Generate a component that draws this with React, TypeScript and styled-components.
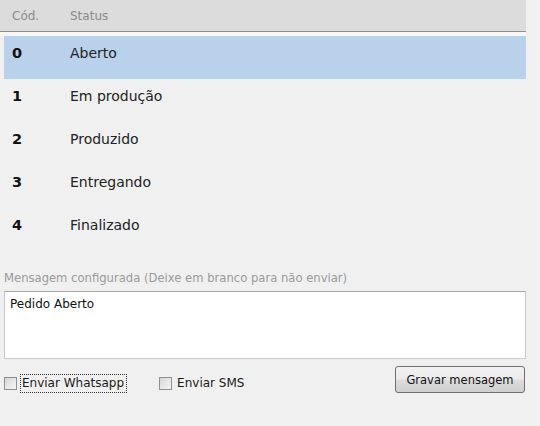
import React from 'react'
import styled, { createGlobalStyle } from 'styled-components'

const GlobalStyle = createGlobalStyle`
  html, body {
    margin: 0;
    padding: 0;
    background: #f0f0f0;
    font-family: 'DejaVu Sans', Verdana, sans-serif;
  }
`

const Page = styled.div`
  width: 540px;
  height: 426px;
  display: flex;
  flex-direction: column;
`

const Grid = styled.div`
  width: 526px;
  display: flex;
  flex-direction: column;
`

const HeaderRow = styled.div`
  height: 31px;
  display: flex;
  align-items: center;
  padding-left: 12px;
  background: #dcdcdc;
  border-bottom: 1px solid #8e8e8e;
  font-size: 12px;
  color: #8a8a8a;
`

const HeaderCell = styled.div<{ w?: number }>`
  width: ${({ w }) => (w ? `${w}px` : 'auto')};
  flex: ${({ w }) => (w ? 'none' : '1')};
`

const Gap = styled.div`
  height: 4px;
  background: #f7f7f7;
`

const Row = styled.div<{ selected?: boolean }>`
  height: 43px;
  margin-left: 4px;
  padding: 8px 0 0 8px;
  box-sizing: border-box;
  display: flex;
  align-items: flex-start;
  line-height: 18px;
  background: ${({ selected }) => (selected ? '#b9d1ea' : 'transparent')};
`

const Code = styled.div`
  width: 58px;
  font-size: 14.5px;
  font-weight: bold;
  color: #111;
`

const StatusText = styled.div`
  font-size: 14px;
  color: #222;
`

const Form = styled.div`
  padding: 19px 0 0 4px;
  width: 522px;
  display: flex;
  flex-direction: column;
`

const Label = styled.div`
  font-size: 11.6px;
  color: #9a9a9a;
  line-height: 16px;
`

const MessageBox = styled.div`
  margin-top: 5px;
  height: 68px;
  box-sizing: border-box;
  background: #fff;
  border: 1px solid #c9c9c9;
  border-top-color: #a8a8a8;
  padding: 4px 5px;
  font-size: 12px;
  color: #111;
  line-height: 16px;
`

const Actions = styled.div`
  margin-top: 7px;
  display: flex;
  align-items: flex-end;
`

const Check = styled.label<{ gapAfter?: number }>`
  display: flex;
  align-items: center;
  margin-right: ${({ gapAfter }) => gapAfter ?? 0}px;
  margin-bottom: 1px;
  font-size: 12px;
  color: #1a1a1a;
`

const Box = styled.span`
  width: 13px;
  height: 13px;
  box-sizing: border-box;
  border: 1px solid #8e8f8f;
  background: linear-gradient(135deg, #d6d6d6 0%, #eaeaea 60%, #f6f6f6 100%);
  margin-right: 4px;
`

const CheckLabel = styled.span<{ focused?: boolean }>`
  padding: 1px 2px 1px 1px;
  line-height: 15px;
  outline: ${({ focused }) => (focused ? '1px dotted #333' : 'none')};
`

const Spacer = styled.div`
  flex: 1;
`

const Button = styled.button`
  width: 130px;
  height: 27px;
  margin-right: 1px;
  border: 1px solid #707070;
  border-radius: 3px;
  background: linear-gradient(#f2f2f2 0%, #ebebeb 48%, #dddddd 52%, #cfcfcf 100%);
  font-family: 'DejaVu Sans', Verdana, sans-serif;
  font-size: 11.5px;
  color: #111;
  padding: 0;
`

const statuses = [
  { code: 0, name: 'Aberto' },
  { code: 1, name: 'Em produção' },
  { code: 2, name: 'Produzido' },
  { code: 3, name: 'Entregando' },
  { code: 4, name: 'Finalizado' },
]

export default function App() {
  return (
    <Page>
      <GlobalStyle />
      <Grid>
        <HeaderRow>
          <HeaderCell w={58}>Cód.</HeaderCell>
          <HeaderCell>Status</HeaderCell>
        </HeaderRow>
        <Gap />
        {statuses.map((s, i) => (
          <Row key={s.code} selected={i === 0}>
            <Code>{s.code}</Code>
            <StatusText>{s.name}</StatusText>
          </Row>
        ))}
      </Grid>
      <Form>
        <Label>Mensagem configurada (Deixe em branco para não enviar)</Label>
        <MessageBox>Pedido Aberto</MessageBox>
        <Actions>
          <Check gapAfter={33}>
            <Box />
            <CheckLabel focused>Enviar Whatsapp</CheckLabel>
          </Check>
          <Check>
            <Box />
            <CheckLabel>Enviar SMS</CheckLabel>
          </Check>
          <Spacer />
          <Button>Gravar mensagem</Button>
        </Actions>
      </Form>
    </Page>
  )
}
